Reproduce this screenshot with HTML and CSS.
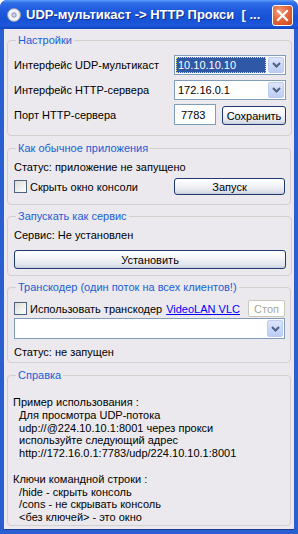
FILE: index.html
```html
<!doctype html>
<html lang="ru">
 <head>
  <meta charset="UTF-8">
  <meta name="viewport" content="width=device-width, initial-scale=1.0">
  <title>UDP-мультикаст -> HTTP Прокси</title>
  <link rel="stylesheet" href="styles.css">
 </head>
 <body>
  <div class="window">
   <div class="titlebar">
    <svg class="app-icon" width="16" height="16" viewBox="0 0 16 16">
     <circle cx="8" cy="8" r="6.5" fill="#eef0f6" stroke="#8d96b0" stroke-width="1"/>
     <circle cx="8" cy="8" r="2.2" fill="#c9cfe0" stroke="#7d87a3" stroke-width="0.8"/>
     <path d="M4 5.5 A4.5 4.5 0 0 1 6.5 3.6" fill="none" stroke="#fff" stroke-width="1.2"/>
    </svg>
    <span class="title">UDP-мультикаст -&gt; HTTP Прокси &nbsp;[ ...</span>
    <div class="close">
     <svg width="13" height="13" viewBox="0 0 13 13">
      <path d="M2 2 L11 11 M11 2 L2 11" stroke="#fff" stroke-width="2.2" stroke-linecap="square"/>
     </svg>
    </div>
   </div>

   <div class="client">
    <fieldset class="group settings">
     <legend>Настройки</legend>
     <div class="row">
      <span class="label">Интерфейс UDP-мультикаст</span>
      <div class="combo">
       <span class="value selected">10.10.10.10</span>
       <span class="drop"><svg width="9" height="6" viewBox="0 0 9 6"><path d="M1 1 L4.5 4.5 L8 1" fill="none" stroke="#4d6185" stroke-width="2"/></svg></span>
      </div>
     </div>
     <div class="row">
      <span class="label">Интерфейс HTTP-сервера</span>
      <div class="combo">
       <span class="value">172.16.0.1</span>
       <span class="drop"><svg width="9" height="6" viewBox="0 0 9 6"><path d="M1 1 L4.5 4.5 L8 1" fill="none" stroke="#4d6185" stroke-width="2"/></svg></span>
      </div>
     </div>
     <div class="row">
      <span class="label">Порт HTTP-сервера</span>
      <input class="port" type="text" value="7783">
      <button class="btn save">Сохранить</button>
     </div>
    </fieldset>

    <fieldset class="group app">
     <legend>Как обычное приложения</legend>
     <div class="status">Статус: приложение не запущено</div>
     <div class="row short">
      <label class="check"><span class="box"></span>Скрыть окно консоли</label>
      <button class="btn run">Запуск</button>
     </div>
    </fieldset>

    <fieldset class="group service">
     <legend>Запускать как сервис</legend>
     <div class="status">Сервис: Не установлен</div>
     <button class="btn install">Установить</button>
    </fieldset>

    <fieldset class="group transcoder">
     <legend>Транскодер (один поток на всех клиентов!)</legend>
     <div class="row short">
      <label class="check"><span class="box"></span>Использовать транскодер</label>
      <a class="link" href="#">VideoLAN VLC</a>
      <button class="btn stop" disabled>Стоп</button>
     </div>
     <div class="combo wide">
      <span class="value"></span>
      <span class="drop"><svg width="9" height="6" viewBox="0 0 9 6"><path d="M1 1 L4.5 4.5 L8 1" fill="none" stroke="#4d6185" stroke-width="2"/></svg></span>
     </div>
     <div class="status tc-status">Статус: не запущен</div>
    </fieldset>

    <fieldset class="group help">
     <legend>Справка</legend>
<div class="help-text">Пример использования :
  Для просмотра UDP-потока
  udp://@224.10.10.1:8001 через прокси
  используйте следующий адрес
  http://172.16.0.1:7783/udp/224.10.10.1:8001

Ключи командной строки :
  /hide - скрыть консоль
  /cons - не скрывать консоль
  &lt;без ключей&gt; - это окно</div>
    </fieldset>
   </div>
  </div>
 </body>
</html>
```

FILE: styles.css
```css
body {
  margin: 0;
  font-family: "Liberation Sans", Arial, sans-serif;
  font-size: 11px;
  color: #000;
  background: #fff;
}
.window {
  width: 298px;
  height: 534px;
  box-sizing: border-box;
  display: flex;
  flex-direction: column;
  background: #2a5fd2;
  border-radius: 7px 7px 0 0;
  overflow: hidden;
}
.titlebar {
  height: 29px;
  flex: none;
  display: flex;
  align-items: center;
  padding: 0 5px 0 5px;
  background: linear-gradient(#5a9cfa 0, #2f6ce8 3px, #1f5bdd 35%, #1751d6 65%, #1c58db 88%, #1245c0 100%);
}
.app-icon {
  flex: none;
  margin: 1px 4px 0 1px;
}
.title {
  flex: 1;
  color: #fff;
  font-weight: bold;
  font-size: 13px;
  white-space: nowrap;
  overflow: hidden;
  text-shadow: 1px 1px 0 #0c2f8c;
}
.close {
  width: 21px;
  height: 21px;
  box-sizing: border-box;
  border: 1px solid #fff;
  border-radius: 3px;
  background: radial-gradient(circle at 35% 30%, #f2a181 0, #e3673d 45%, #cc451b 100%);
  display: flex;
  align-items: center;
  justify-content: center;
  margin-top: 1px;
}
.client {
  flex: 1;
  margin: 0 4px 4px 4px;
  background: #ebe9ed;
  padding: 5px 3px 0 3px;
  border-bottom: 1px solid #1a3f99;
}
.group {
  margin: 5px 0 0 0;
  padding: 6px 5px 6px 6px;
  border: 1px solid #d0d0cc;
  border-radius: 4px;
}
.group:first-child {
  margin-top: 0;
}
.group legend {
  color: #1a5dd6;
  line-height: 13px;
  padding: 0 2px;
  margin-left: 2px;
}
.settings {
  padding-top: 7px;
  padding-bottom: 10px;
}
.app {
  margin-top: 6px;
  padding-bottom: 9px;
}
.row {
  display: flex;
  align-items: center;
  height: 21px;
}
.row + .row {
  margin-top: 4px;
}
.row.short {
  height: 17px;
}
.label {
  width: 160px;
  flex: none;
}
.combo {
  width: 112px;
  height: 20px;
  box-sizing: border-box;
  border: 1px solid #7f9db9;
  background: #fff;
  display: flex;
  align-items: stretch;
  padding: 1px;
}
.combo .value {
  flex: 1;
  padding: 0 2px;
  margin-right: 2px;
  line-height: 16px;
}
.combo .value.selected {
  background: #2f58a6;
  color: #fff;
  outline: 1px dotted #e8dc7c;
  outline-offset: -1px;
}
.combo .drop {
  width: 16px;
  flex: none;
  display: flex;
  align-items: center;
  justify-content: center;
  border: 1px solid #bccbee;
  border-radius: 2px;
  background: linear-gradient(#dbe5fb, #bccdf4);
  box-sizing: border-box;
}
.combo.wide {
  width: 271px;
  height: 21px;
  margin-top: 1px;
}
.port {
  width: 42px;
  height: 21px;
  box-sizing: border-box;
  border: 1px solid #7f9db9;
  font: inherit;
  padding: 0 0 0 6px;
  margin: 0;
}
.btn {
  font: inherit;
  color: #000;
  border: 1px solid #1f3a70;
  border-radius: 3px;
  background: linear-gradient(#ffffff 0, #f5f5f8 40%, #e2e5ee 80%, #c9cfdf 100%);
  padding: 0;
  margin: 0;
}
.save {
  width: 64px;
  height: 19px;
  margin-left: 6px;
  align-self: flex-end;
}
.run {
  width: 111px;
  height: 17px;
  margin-left: auto;
}
.service {
  padding-bottom: 6px;
}
.install {
  display: block;
  width: 272px;
  height: 19px;
  margin-top: 8px;
}
.stop {
  width: 37px;
  height: 17px;
  margin-left: auto;
  background: #fff;
  color: #a8a79c;
  border-color: #c9c7ba;
  border-radius: 2px;
}
.status {
  line-height: 13px;
}
.app .status {
  margin-bottom: 4px;
}
.transcoder {
  padding-top: 6px;
  padding-bottom: 3px;
}
.tc-status {
  margin-top: 7px;
}
.check {
  display: flex;
  align-items: center;
}
.check .box {
  width: 13px;
  height: 13px;
  box-sizing: border-box;
  border: 1px solid #4e6280;
  background: linear-gradient(135deg, #dcdcd6, #fff);
  margin-right: 3px;
}
.link {
  color: #0000ff;
  text-decoration: underline;
  margin-left: 4px;
}
.help {
  margin-top: 6px;
  padding-top: 0;
  padding-bottom: 1px;
}
.help-text {
  white-space: pre;
  line-height: 12.8px;
  padding-top: 14px;
  margin-left: -1px;
}
```
